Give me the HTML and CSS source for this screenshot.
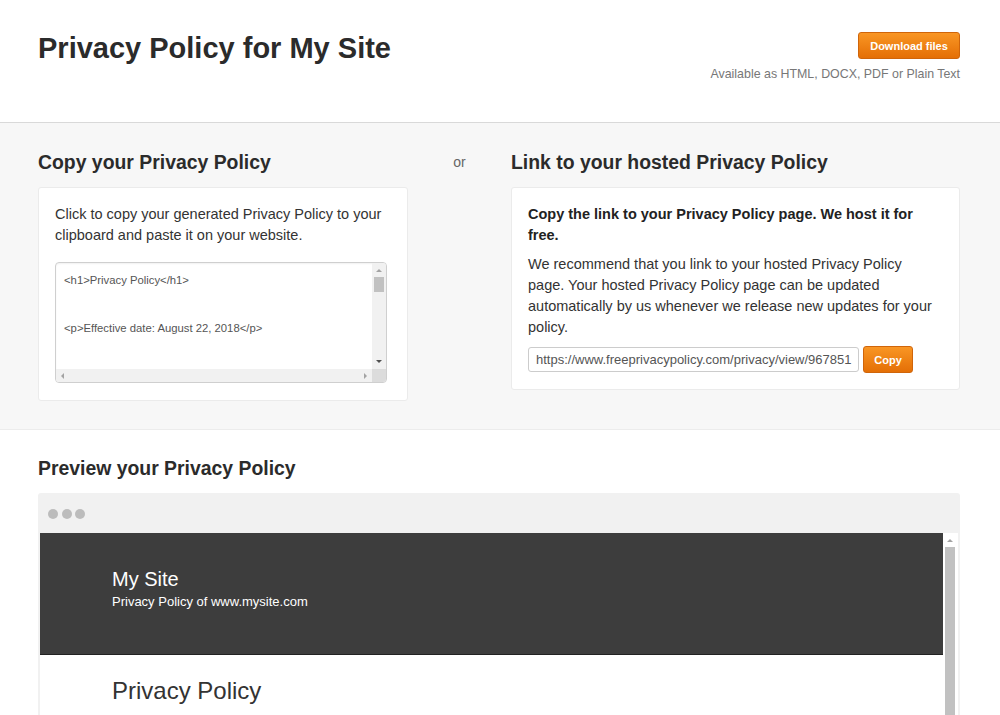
FILE: index.html
```html
<!DOCTYPE html>
<html>
<head>
<meta charset="utf-8">
<link rel="stylesheet" href="styles.css">
</head>
<body>
<header class="top">
  <h1 class="title">Privacy Policy for My Site</h1>
  <div class="download">
    <button class="btn btn-download">Download files</button>
    <div class="formats">Available as HTML, DOCX, PDF or Plain Text</div>
  </div>
</header>

<section class="options">
  <div class="col">
    <h2 class="heading">Copy your Privacy Policy</h2>
    <div class="card card-copy">
      <p class="text">Click to copy your generated Privacy Policy to your clipboard and paste it on your website.</p>
      <div class="code">
        <div class="code-text">&lt;h1&gt;Privacy Policy&lt;/h1&gt;<br><br><br>&lt;p&gt;Effective date: August 22, 2018&lt;/p&gt;</div>
        <div class="vbar">
          <span class="arr up"></span>
          <span class="thumb"></span>
          <span class="arr down"></span>
        </div>
        <div class="hbar">
          <span class="arr left"></span>
          <span class="arr right"></span>
        </div>
        <div class="corner"></div>
      </div>
    </div>
  </div>
  <div class="or">or</div>
  <div class="col">
    <h2 class="heading">Link to your hosted Privacy Policy</h2>
    <div class="card card-link">
      <p class="text strong">Copy the link to your Privacy Policy page. We host it for free.</p>
      <p class="text">We recommend that you link to your hosted Privacy Policy page. Your hosted Privacy Policy page can be updated automatically by us whenever we release new updates for your policy.</p>
      <div class="link-row">
        <div class="link-input">https://www.freeprivacypolicy.com/privacy/view/967851</div>
        <button class="btn btn-copy">Copy</button>
      </div>
    </div>
  </div>
</section>

<section class="preview">
  <h2 class="heading">Preview your Privacy Policy</h2>
  <div class="browser">
    <div class="browser-bar">
      <span class="dot"></span><span class="dot"></span><span class="dot"></span>
    </div>
    <div class="viewport">
      <div class="page">
        <div class="site-head">
          <div class="site-name">My Site</div>
          <div class="site-sub">Privacy Policy of www.mysite.com</div>
        </div>
        <div class="page-body">
          <div class="page-title">Privacy Policy</div>
        </div>
      </div>
      <div class="pscroll">
        <span class="arr up"></span>
        <span class="pthumb"></span>
      </div>
    </div>
  </div>
</section>
</body>
</html>
```

FILE: styles.css
```css
* { box-sizing: border-box; }
html, body { margin: 0; padding: 0; }
body {
  font-family: "Liberation Sans", Arial, sans-serif;
  color: #333;
  background: #fff;
  height: 715px;
  overflow: hidden;
}

.top {
  height: 123px;
  padding: 32px 40px 0 38px;
  display: flex;
  justify-content: space-between;
  align-items: flex-start;
  border-bottom: 1px solid #d9d9d9;
}
.title {
  margin: 0;
  font-size: 29px;
  line-height: 33px;
  font-weight: bold;
  color: #2b2b2b;
}
.download {
  display: flex;
  flex-direction: column;
  align-items: flex-end;
}
.btn {
  font-family: "Liberation Sans", Arial, sans-serif;
  font-weight: bold;
  font-size: 11px;
  color: #fff;
  background: linear-gradient(#f99624, #e46f06);
  border: 1px solid #d0650a;
  border-radius: 3px;
  padding: 0;
  cursor: pointer;
}
.btn-download {
  width: 102px;
  height: 27px;
}
.formats {
  margin-top: 8px;
  font-size: 12.4px;
  color: #777;
  line-height: 15px;
}

.options {
  background: #f7f7f7;
  border-bottom: 1px solid #ececec;
  padding: 27px 40px 29px 38px;
  display: grid;
  grid-template-columns: 370px 1fr 449px;
  align-items: start;
  height: 307px;
}
.heading {
  margin: 0 0 13px;
  font-size: 19.4px;
  line-height: 24px;
  font-weight: bold;
  color: #2b2b2b;
}
.or {
  text-align: center;
  font-size: 14px;
  color: #666;
  line-height: 24px;
}
.card {
  background: #fff;
  border: 1px solid #ebebeb;
  border-radius: 3px;
  padding: 16px;
}
.card-copy { padding: 16px 20px 17px 16px; }
.card-link { padding: 16px 20px 16px 16px; }
.text {
  margin: 0;
  font-size: 14.5px;
  line-height: 21px;
  color: #333;
}
.strong { font-weight: bold; color: #222; margin-bottom: 8px; }

.code {
  margin-top: 16px;
  height: 121px;
  border: 1px solid #cfcfcf;
  border-radius: 4px;
  box-shadow: inset 0 1px 2px rgba(0,0,0,0.06);
  display: grid;
  grid-template-columns: 1fr 14px;
  grid-template-rows: 1fr 13px;
  overflow: hidden;
  background: #fff;
}
.code-text {
  padding: 9px 8px;
  font-size: 11.3px;
  line-height: 16px;
  color: #555;
}
.vbar {
  background: #f1f1f1;
  position: relative;
}
.hbar {
  background: #f1f1f1;
  position: relative;
}
.corner { background: #dcdcdc; }
.arr {
  position: absolute;
  width: 0; height: 0;
}
.arr.up {
  top: 6px; left: 4px;
  border-left: 3px solid transparent;
  border-right: 3px solid transparent;
  border-bottom: 3px solid #a3a3a3;
}
.arr.down {
  bottom: 6px; left: 4px;
  border-left: 3px solid transparent;
  border-right: 3px solid transparent;
  border-top: 3px solid #505050;
}
.arr.left {
  left: 5px; top: 4px;
  border-top: 3px solid transparent;
  border-bottom: 3px solid transparent;
  border-right: 3px solid #a3a3a3;
}
.arr.right {
  right: 5px; top: 4px;
  border-top: 3px solid transparent;
  border-bottom: 3px solid transparent;
  border-left: 3px solid #a3a3a3;
}
.thumb {
  position: absolute;
  top: 14px; left: 2px;
  width: 10px; height: 15px;
  background: #c1c1c1;
}

.link-row {
  margin-top: 8px;
  display: flex;
  align-items: center;
  gap: 4px;
}
.link-input {
  width: 331px;
  height: 25px;
  border: 1px solid #ccc;
  border-radius: 3px;
  padding: 0 7px;
  font-size: 13px;
  line-height: 23px;
  color: #555;
  white-space: nowrap;
  overflow: hidden;
}
.btn-copy {
  width: 50px;
  height: 27px;
}

.preview {
  padding: 26px 40px 0 38px;
}
.preview .heading { margin-bottom: 13px; }
.browser {
  background: #f1f1f1;
  border-radius: 3px 3px 0 0;
  padding: 0 2px;
}
.browser-bar {
  height: 40px;
  display: flex;
  gap: 3.5px;
  padding: 16px 0 0 8px;
}
.dot {
  width: 10px; height: 10px;
  border-radius: 50%;
  background: #bcbcbc;
}
.viewport {
  display: grid;
  grid-template-columns: 1fr 15px;
  height: 200px;
}
.page { background: #fff; }
.site-head {
  background: #3d3d3d;
  border-bottom: 1px solid #222;
  height: 122px;
  padding: 34px 0 0 72px;
  color: #fff;
}
.site-name {
  font-size: 20px;
  line-height: 24px;
}
.site-sub {
  font-size: 13px;
  line-height: 16px;
  margin-top: 3px;
}
.page-body {
  padding: 22px 0 0 72px;
}
.page-title {
  font-size: 24px;
  line-height: 28px;
  color: #333;
}
.pscroll {
  background: #fff;
  position: relative;
}
.pscroll .arr.up { top: 6px; left: 4px; }
.pscroll .pthumb {
  position: absolute;
  top: 14px; left: 2px;
  width: 10px; bottom: 0;
  background: #c1c1c1;
}
```
